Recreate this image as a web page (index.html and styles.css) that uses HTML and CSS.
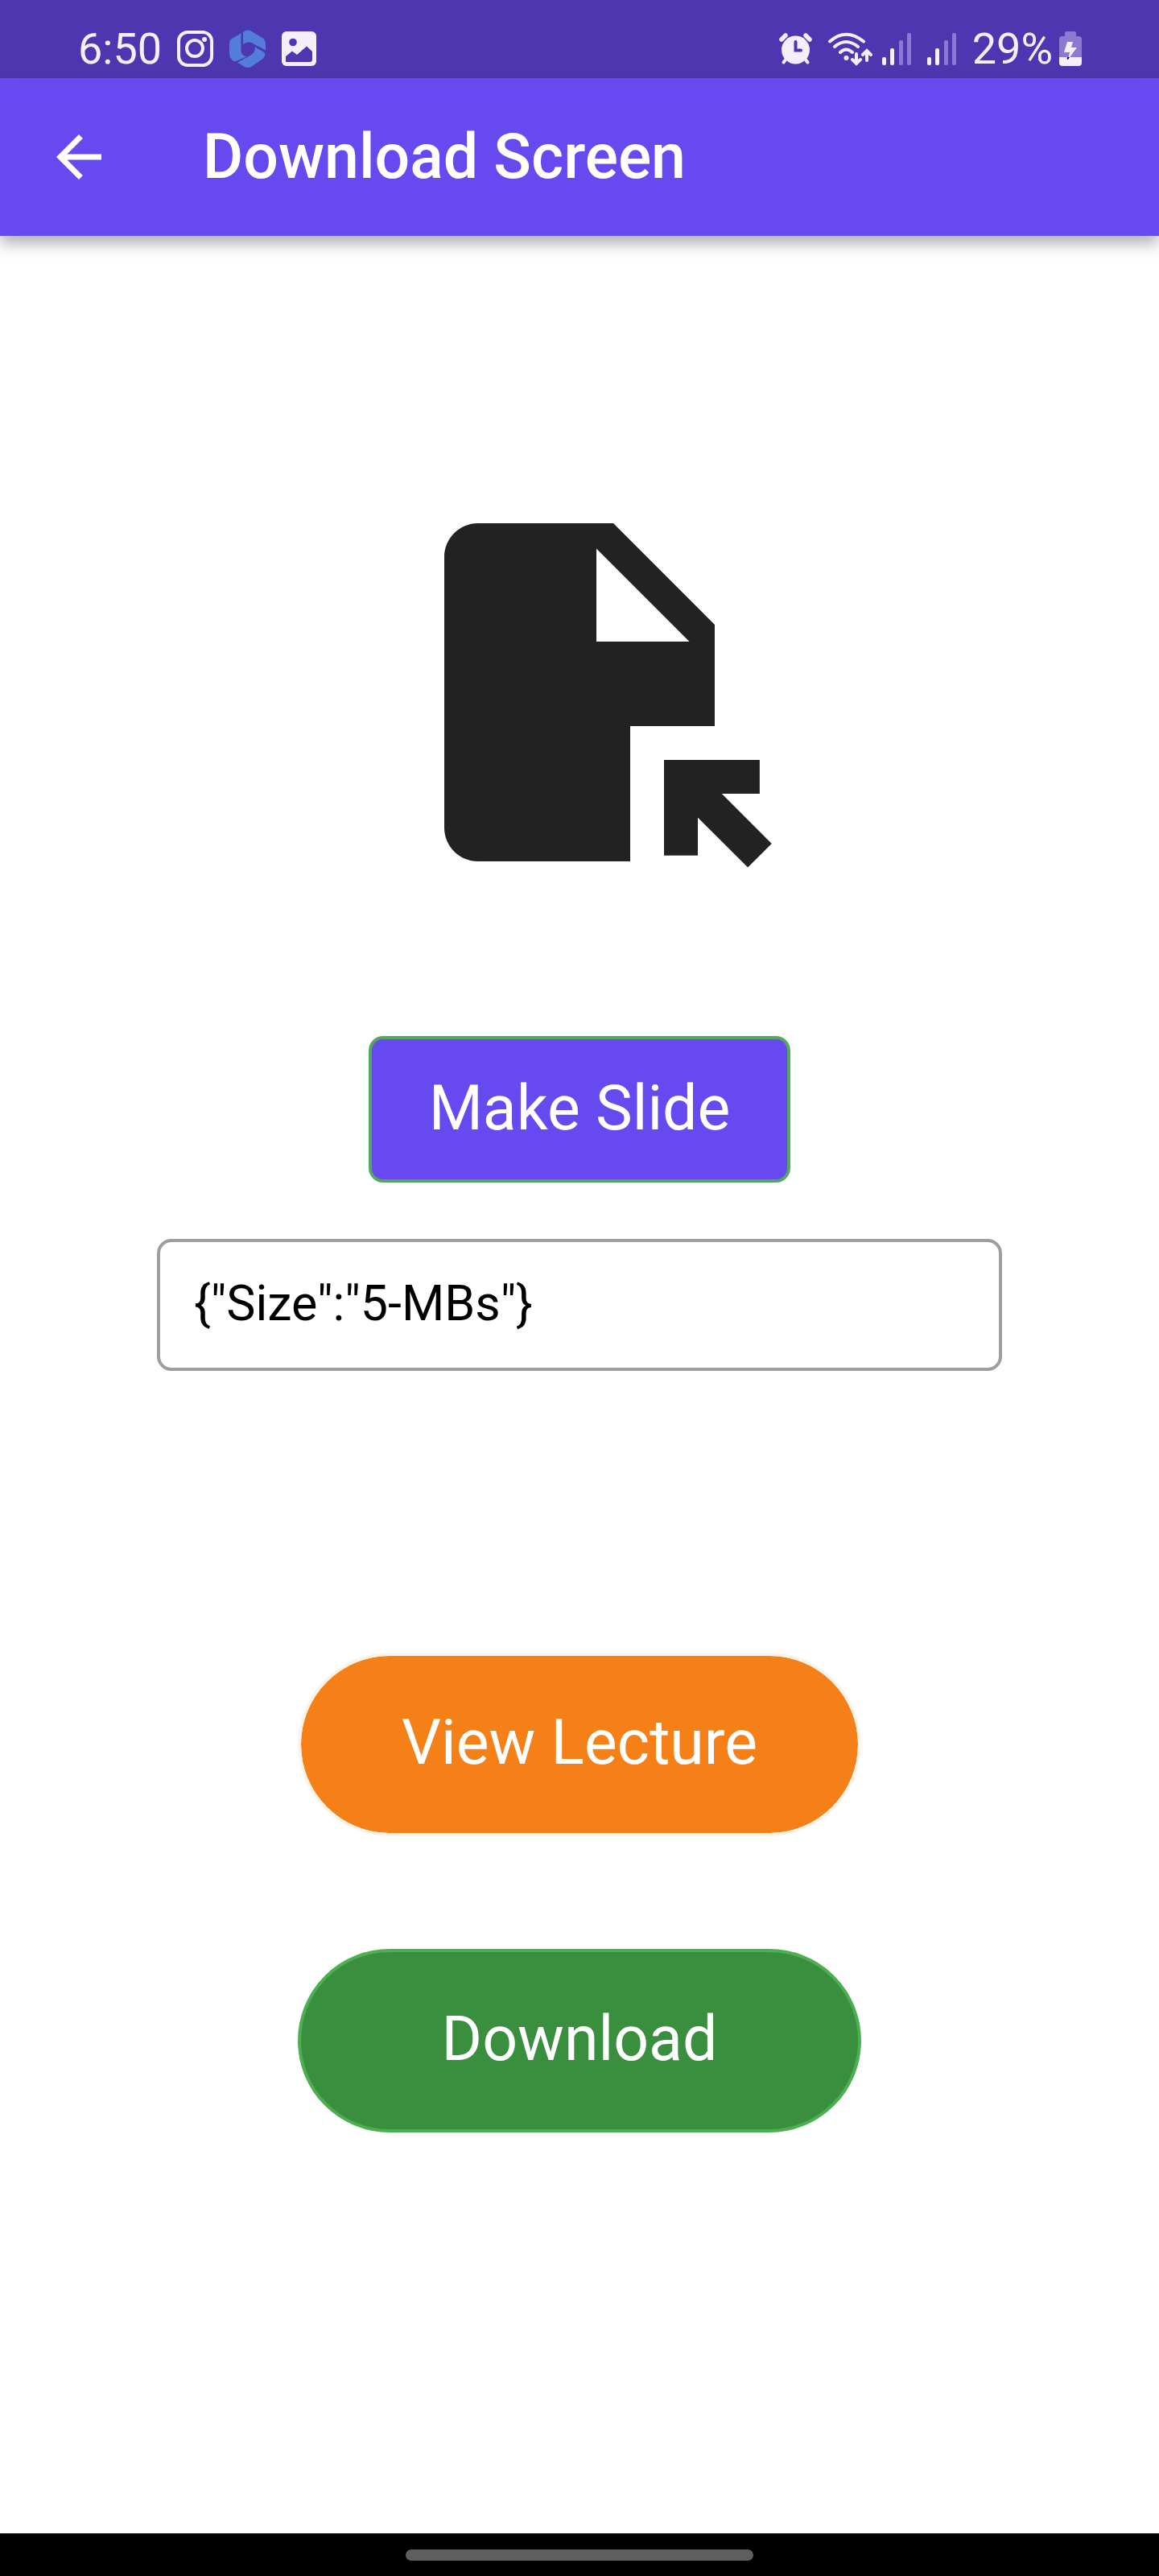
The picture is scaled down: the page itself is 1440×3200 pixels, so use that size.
FILE: index.html
```html
<!DOCTYPE html>
<html lang="en">
<head>
<meta charset="utf-8">
<meta name="viewport" content="width=device-width, initial-scale=1">
<title>Download Screen</title>
<link rel="stylesheet" href="styles.css">
</head>
<body>
<div class="status-bar">
  <div class="status-left">
    <span class="clock">6:50</span>
    <svg class="icon" width="46" height="46" viewBox="0 0 46 46" fill="none" stroke="currentColor">
      <rect x="2" y="2" width="41" height="41" rx="11" stroke-width="4"/>
      <circle cx="22" cy="22" r="10" stroke-width="4"/>
      <circle cx="34" cy="11" r="3" fill="currentColor" stroke="none"/>
    </svg>
    <svg class="icon" width="46" height="48" viewBox="0 0 46 48" fill="#527ddb">
      <path d="M14.500 4.200V27.500C15.500 31 18.500 33 21.500 33.500L8 39Q5 40 3 37Q0 34 0 30V17Q0 13 3 11Z"/>
      <path d="M17 3L20 1Q23 0 26 1L41 10Q45 13 45 17V25.500L31 18C26 14 20 15 17 18.500Z"/>
      <path d="M31.500 21L44 28.500Q45 33 41 36.500L27 46Q23 48 19 46L10 40.500L25 32.500C30 30 32.500 26 31.500 21Z"/>
    </svg>
    <svg class="icon" width="44" height="46" viewBox="0 0 44 46">
      <rect x="0" y="1" width="43" height="43" rx="6" fill="currentColor"/>
      <circle cx="14" cy="14.500" r="4.800" fill="#4d37b0"/>
      <path d="M5 38V32L13 25.500L19 30L31 19.500L38 26V36Q38 39 35 39H6Q5 39 5 38Z" fill="#4d37b0"/>
    </svg>
  </div>
  <div class="status-right">
    <svg class="icon" width="41" height="44" viewBox="0 0 41 44" stroke="currentColor" stroke-linecap="round" fill="none">
      <path d="M3 10L8 5M38 10L33 5" stroke-width="5.500"/>
      <path d="M9 34L5.500 38.500M32 34L35.500 38.500" stroke-width="4"/>
      <circle cx="20.500" cy="23" r="17.500" fill="currentColor" stroke="none"/>
      <path d="M20.500 13V23.500H27" stroke="#4d37b0" stroke-width="4"/>
    </svg>
    <div class="signals">
      <svg class="icon" width="56" height="44" viewBox="0 0 56 44" stroke="currentColor" stroke-linecap="round" fill="none" stroke-width="4">
        <path d="M3 12.500Q23 -5 45 12.500M9 19Q23 7 38 19M16 26Q23 19 31 26"/>
        <circle cx="23.500" cy="33" r="3" fill="currentColor" stroke="none"/>
        <path d="M36 28V39M31 35L36 40L41 35M49 36V25M44 29L49 24L54 29"/>
      </svg>
      <svg class="icon" width="37" height="44" viewBox="0 0 37 44" fill="currentColor">
        <rect x="0" y="32" width="5" height="10" rx="2"/><rect x="10" y="21" width="5" height="21" rx="2"/>
        <g fill="#8b7acf"><rect x="21" y="11" width="5" height="31" rx="2"/><rect x="31" y="2" width="5" height="40" rx="2"/></g>
      </svg>
    </div>
    <svg class="icon" width="37" height="44" viewBox="0 0 37 44" fill="currentColor">
      <rect x="0" y="32" width="5" height="10" rx="2"/><rect x="10" y="21" width="5" height="21" rx="2"/>
      <g fill="#8b7acf"><rect x="21" y="11" width="5" height="31" rx="2"/><rect x="31" y="2" width="5" height="40" rx="2"/></g>
    </svg>
    <span class="battery">
      <span class="charge">29%</span>
      <svg class="icon" width="28" height="46" viewBox="0 0 28 46">
        <path d="M7 7V3Q7 1 9 1H19Q21 1 21 3V7H24Q28 7 28 11V34H0V11Q0 7 4 7Z" fill="#8b7acf"/>
        <path d="M0 33H28V40Q28 44 24 44H4Q0 44 0 40Z" fill="currentColor"/>
        <path d="M10 14H17L15 21H22L11 36L13 27H6Z" fill="currentColor"/>
        <path d="M10 33H13L11 36Q9 36 10 33Z" fill="#111"/>
      </svg>
    </span>
  </div>
</div>

<header class="app-bar">
  <button class="back" type="button" aria-label="Back">
    <svg class="icon" width="84" height="84" viewBox="0 0 24 24" fill="currentColor"><path d="M20 11H7.830l5.590-5.590L12 4l-8 8 8 8 1.410-1.410L7.830 13H20v-2z"/></svg>
  </button>
  <h1 class="title">Download Screen</h1>
</header>

<main class="content">
  <svg class="file-icon" viewBox="0 0 24 24" fill="currentColor" aria-hidden="true">
    <path d="M14 2H6c-1.100 0-2 .9-2 2v16c0 1.100.89 2 2 2h9v-8h5V8l-6-6zm-1 7V3.500L18.500 9H13zM17 21.660V16h5.660v2h-2.240l2.950 2.950-1.410 1.410L19 19.410v2.240h-2z"/>
  </svg>
  <button class="button make" type="button">Make Slide</button>
  <input class="result" type="text" aria-label="Slide size" value="{&quot;Size&quot;:&quot;5-MBs&quot;}">
  <div class="actions">
    <button class="button pill view" type="button">View Lecture</button>
    <button class="button pill download" type="button">Download</button>
  </div>
</main>

<footer class="nav-bar"><div class="handle"></div></footer>
</body>
</html>
```

FILE: styles.css
```css
* { box-sizing: border-box; }

body {
  margin: 0;
  min-height: 100vh;
  display: flex;
  flex-direction: column;
  background: #fff;
  color: #000;
  font-family: Roboto, "Liberation Sans", sans-serif;
}

.icon { display: block; flex: none; }

.status-bar {
  height: 97px;
  padding: 24px 96px 0 97px;
  display: flex;
  justify-content: space-between;
  align-items: flex-start;
  background: #4d37b0;
  color: #f3effc;
  font-size: 54px;
  line-height: 73px;
}

.status-left,
.status-right,
.signals,
.battery { display: flex; align-items: center; }
.status-left { gap: 19px; }
.status-right { gap: 19px; }
.signals { gap: 12px; }
.battery { gap: 8px; }

.app-bar {
  height: 196px;
  padding: 0 56px;
  display: flex;
  align-items: center;
  gap: 112px;
  background: #6649ef;
  color: #fff;
  box-shadow: 0 10px 18px rgba(0, 0, 0, .3);
}

.back {
  padding: 0;
  border: 0;
  background: none;
  color: inherit;
}

.title {
  margin: 0;
  font-size: 77px;
  font-weight: 500;
  line-height: 96px;
}

.content {
  flex: 1;
  padding: 315px 24px 0;
  display: flex;
  flex-direction: column;
  align-items: center;
}

.file-icon {
  width: 504px;
  height: 504px;
  color: #222;
}

.button {
  font-family: inherit;
  font-size: 77px;
  line-height: 104px;
  color: #fff;
  border: 4px solid;
}

.make {
  margin-top: 175px;
  padding: 34px 71px 36px;
  border-color: #56a861;
  border-radius: 18px;
  background: #6649ef;
}

.result {
  width: 100%;
  max-width: 1050px;
  height: 164px;
  margin-top: 70px;
  padding: 0 42px 4px;
  border: 4px solid #9e9e9e;
  border-radius: 18px;
  background: #fff;
  color: #000;
  font-family: inherit;
  font-size: 61px;
}

.actions {
  width: 100%;
  max-width: 700px;
  margin-top: 350px;
  display: flex;
  flex-direction: column;
  gap: 140px;
}

.pill {
  padding: 56px 24px 60px;
  border-radius: 114px;
}

.view { border-color: #fef3e8; background: #f58018; background-clip: padding-box; }
.download { border-color: #4caf50; background: #3a8f3e; }

.nav-bar {
  height: 53px;
  display: flex;
  justify-content: center;
  align-items: center;
  background: #000;
}

.handle {
  width: 30%;
  height: 14px;
  border-radius: 7px;
  background: #5e5e5e;
}
```
